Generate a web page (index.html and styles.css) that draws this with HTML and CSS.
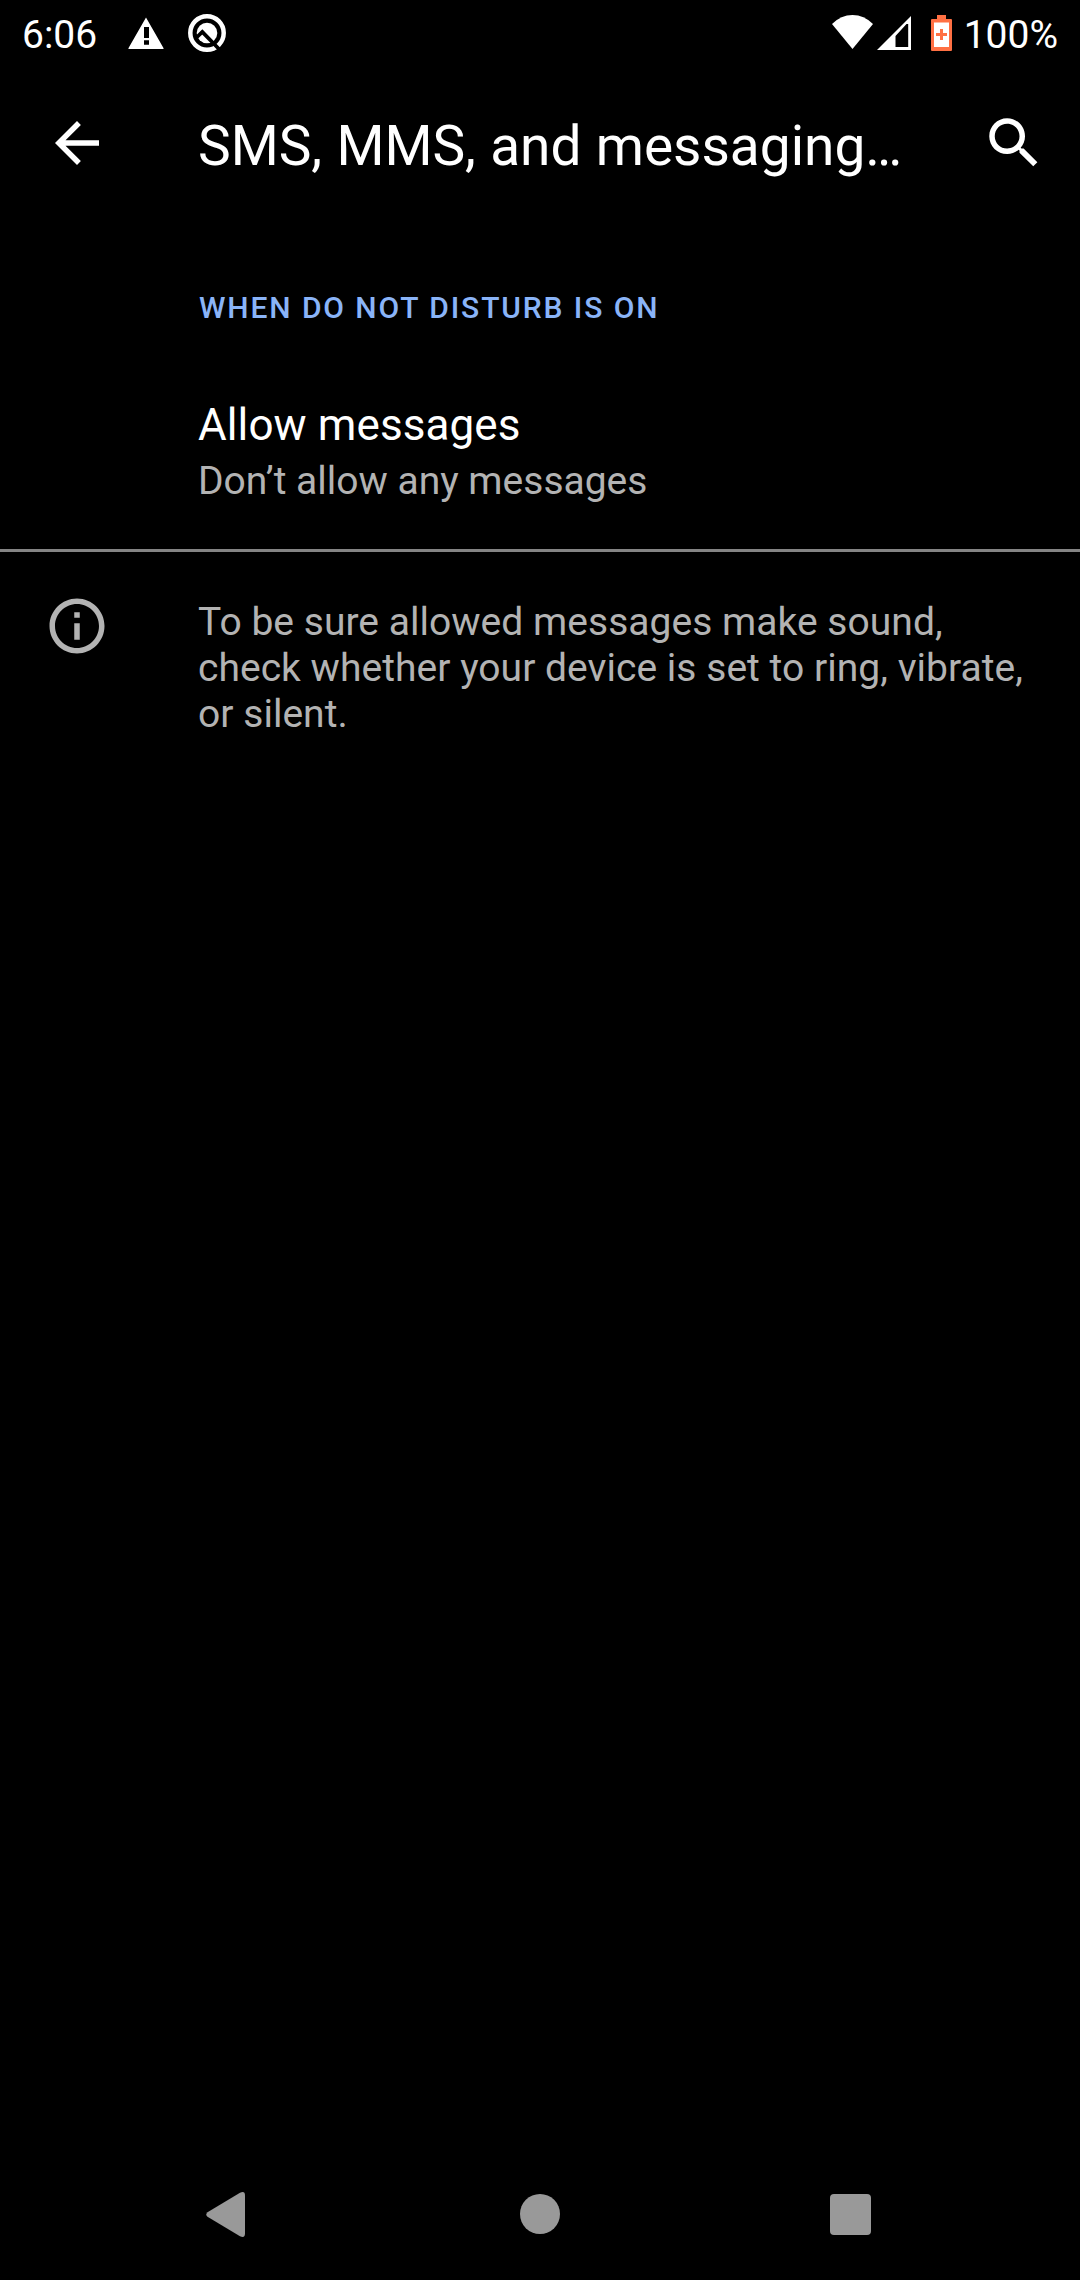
FILE: index.html
```html
<!DOCTYPE html>
<html lang="en">
<head>
<meta charset="utf-8">
<title>SMS, MMS, and messaging apps</title>
<link rel="stylesheet" href="styles.css">
</head>
<body>
<div class="screen">
  <header class="status">
    <div class="status-left">
      <span class="clock">6:06</span>
      <svg class="warning" width="36" height="32" viewBox="0 0 36 32"><path fill="#fff" fill-rule="evenodd" d="M18 .6 35.6 31.2Q36 32 35 32H1Q0 32 .4 31.2ZM16 10v11h5V10ZM16 23.3v4.5h5v-4.5Z"/></svg>
      <svg class="q-icon" width="38" height="38" viewBox="0 0 38 38"><circle cx="19" cy="19" r="16.700" fill="none" stroke="#fff" stroke-width="4.500"/><circle cx="19" cy="19" r="10.300" fill="#fff"/><path d="M7 25 14.300 18 31 35" fill="none" stroke="#000" stroke-width="3.800"/></svg>
    </div>
    <div class="status-right">
      <svg class="wifi" width="41" height="34" viewBox="0 0 41 34"><path fill="#fff" d="M0 9Q9 0 20.5 0T41 9L20.5 34Z"/></svg>
      <svg class="signal" width="34" height="34" viewBox="0 0 34 34"><path fill="#fff" fill-rule="evenodd" d="M34 0V34H0ZM31.200 8H29.500L18.500 20V31H31.200Z"/></svg>
      <svg class="battery" width="21" height="36" viewBox="0 0 21 36"><path fill="#ff7043" d="M6 0h9v4h5q1 0 1 1v30q0 1-1 1H1q-1 0-1-1V5q0-1 1-1h5Z"/><path fill="#fff" d="M3 7.500h15v24.500H3Z"/><path fill="#ff7043" d="M9 14h3v4h4v3h-4v4H9v-4H5v-3h4Z"/></svg>
      <span class="percent">100%</span>
    </div>
  </header>
  <div class="toolbar">
    <svg class="icon" viewBox="0 0 24 24"><path d="M20 11H7.830l5.590-5.590L12 4l-8 8 8 8 1.410-1.410L7.830 13H20z"/></svg>
    <h1 class="title">SMS, MMS, and messaging…</h1>
    <svg class="icon" viewBox="0 0 24 24"><path d="M15.500 14h-.790l-.280-.270C15.410 12.590 16 11.110 16 9.500 16 5.910 13.090 3 9.500 3S3 5.910 3 9.500 5.910 16 9.500 16c1.610 0 3.090-.590 4.230-1.570l.270.280v.790l5 4.990L20.490 19zm-6 0C7.010 14 5 11.990 5 9.500S7.010 5 9.500 5 14 7.010 14 9.500 11.990 14 9.500 14z"/></svg>
  </div>
  <main class="content">
    <h2 class="category">WHEN DO NOT DISTURB IS ON</h2>
    <div class="preference">
      <div class="pref-title">Allow messages</div>
      <div class="pref-summary">Don’t allow any messages</div>
    </div>
    <div class="footer">
      <svg class="icon info" viewBox="0 0 24 24"><path d="M11 7h2v2h-2zm0 4h2v6h-2zm1-9C6.480 2 2 6.480 2 12s4.480 10 10 10 10-4.480 10-10S17.520 2 12 2zm0 18c-4.410 0-8-3.590-8-8s3.590-8 8-8 8 3.590 8 8-3.590 8-8 8z"/></svg>
      <p class="footer-text">To be sure allowed messages make sound,<br>check whether your device is set to ring, vibrate,<br>or silent.</p>
    </div>
  </main>
  <nav class="navbar">
    <svg width="39" height="45" viewBox="0 0 39 45"><path d="M34 .8Q39-1.500 39 3.500v38q0 5-5 2.700L1.500 24.800Q-1 22.500 1.500 20.200Z"/></svg>
    <svg class="home" width="40" height="40" viewBox="0 0 40 40"><circle cx="20" cy="20" r="20"/></svg>
    <svg width="41" height="41" viewBox="0 0 41 41"><rect width="41" height="41" rx="4"/></svg>
  </nav>
</div>
</body>
</html>
```
FILE: styles.css
```css
* { box-sizing: border-box; margin: 0; }

body {
  background: #000;
  color: #fff;
  font-family: Roboto, "Noto Sans", sans-serif;
}

.screen {
  display: flex;
  flex-direction: column;
  width: 1080px;
  height: 2280px;
  overflow: hidden;
}

.status {
  display: flex;
  justify-content: space-between;
  height: 66px;
  padding: 0 22px;
  font-size: 39px;
  line-height: 70px;
}

.status-left, .status-right { display: flex; }
.status svg { flex: none; }
.clock { width: 106px; }
.warning { margin-top: 17px; }
.q-icon { margin: 14px 0 0 24px; }
.wifi { margin-top: 15px; }
.signal { margin: 16px 0 0 4px; }
.battery { margin: 15px 12px 0 20px; }

.toolbar {
  display: flex;
  align-items: center;
  height: 154px;
  padding: 0 33px 0 44px;
}

.icon {
  flex: none;
  width: 66px;
  height: 66px;
  fill: #fff;
}

.title {
  flex: 1;
  padding: 5px 0 0 88px;
  font-size: 55px;
  font-weight: 400;
  line-height: 64px;
  word-spacing: 0.6px;
  white-space: nowrap;
}

.content { flex: 1; }

.category {
  padding: 70px 0 0 199px;
  color: #8ab4f8;
  font-size: 30px;
  font-weight: 500;
  line-height: 36px;
  letter-spacing: 1.9px;
}

.preference {
  height: 223px;
  padding: 73px 0 0 198px;
}

.pref-title {
  font-size: 44px;
  line-height: 52px;
  letter-spacing: 0.1px;
}

.pref-summary {
  padding-top: 7px;
  color: #b3b3b3;
  font-size: 39px;
  line-height: 46px;
}

.footer {
  display: flex;
  padding: 41px 0 0 44px;
  border-top: 3px solid #848484;
}

.info { fill: #b3b3b3; }

.footer-text {
  padding: 6px 0 0 88px;
  color: #b3b3b3;
  font-size: 39px;
  line-height: 46px;
  letter-spacing: 0.03px;
}

.navbar {
  display: flex;
  align-items: center;
  justify-content: space-between;
  height: 132px;
  padding: 0 209px 0 206px;
  fill: #999;
}

.home { margin-left: 4px; }
```
